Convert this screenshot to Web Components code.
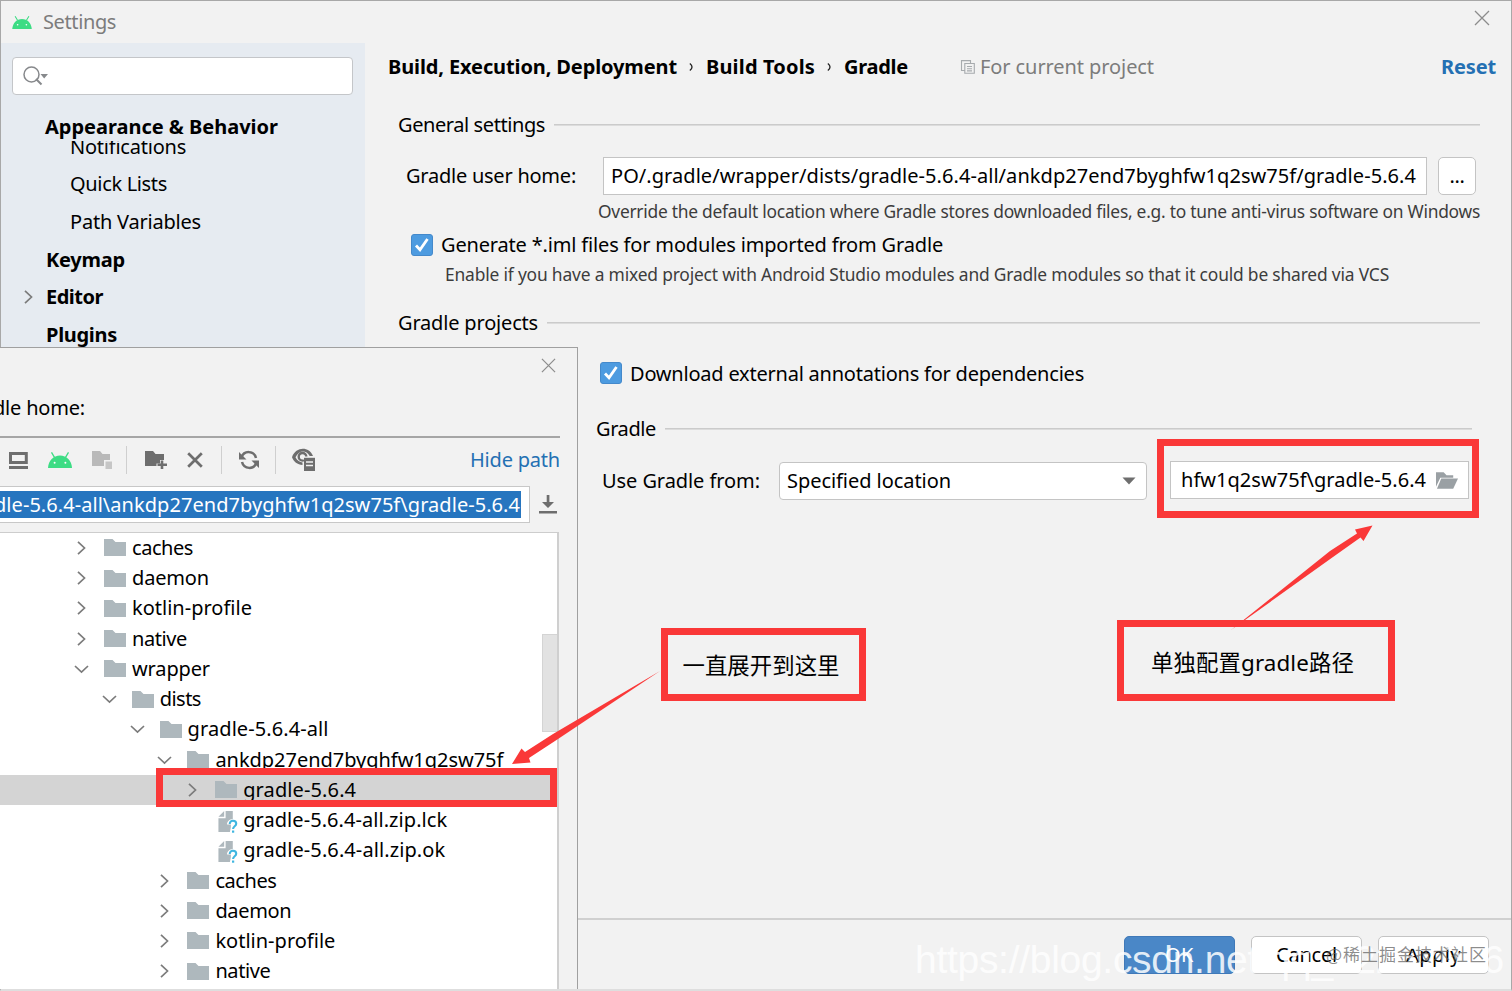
<!DOCTYPE html>
<html lang="en">
<head>
<meta charset="utf-8">
<title>Settings</title>
<style>
    body {
        margin: 0;
        width: 1512px;
        height: 991px;
        overflow: hidden;
        position: relative;
        background: #f2f2f2;
        color: #000;
        font: 20px/28px "Noto Sans", "Noto Sans CJK SC", sans-serif;
    }
</style>
</head>
<body>
<settings-window></settings-window>
<path-dialog></path-dialog>
<page-marks></page-marks>

<script>
const ICONS = {
    android: `<svg viewBox="0 0 24 16"><path d="M3.500 .3l3 5M20.500 .3l-3 5" stroke="#3ddc84" stroke-width="1.3" fill="none"/><path d="M0 16C.4 8.500 5.500 3.600 12 3.600S23.600 8.500 24 16z" fill="#3ddc84"/><circle cx="6.600" cy="10.800" r="1" fill="#fff"/><circle cx="17.400" cy="10.800" r="1" fill="#fff"/></svg>`,
    close: `<svg viewBox="0 0 16 16"><path d="M1 1l14 14M15 1L1 15" stroke="#8c8c8c" stroke-width="1.300" fill="none"/></svg>`,
    search: `<svg viewBox="0 0 26 20"><circle cx="8.500" cy="8.500" r="7.500" stroke="#87898c" stroke-width="1.500" fill="none"/><path d="M13 13l5.500 5.500" stroke="#87898c" stroke-width="2"/><path d="M17.500 8H25l-3.800 4.500z" fill="#87898c"/></svg>`,
    right: `<svg viewBox="0 0 14 14"><path d="M4 .8L10.500 7 4 13.200" stroke="#7b7b7b" stroke-width="1.700" fill="none"/></svg>`,
    down: `<svg viewBox="0 0 14 14"><path d="M1 4l6.500 6L14 4" stroke="#7b7b7b" stroke-width="1.700" fill="none"/></svg>`,
    folder: `<svg viewBox="0 0 22 17"><path d="M0 0h8.500l3 3H22v14H0z" fill="#aeb8bd"/></svg>`,
    file: `<svg viewBox="0 0 20 23"><path d="M6 0v6H0zM7.500 0H15v8.500c-3.500 0-6 2-6 5.500h4v3l-1 5H0V7.500h7.500z" fill="#aeb8bd"/><path d="M11.800 13.500c0-4.500 6.800-4.200 6.800-.2 0 2.700-3.300 2.700-3.300 5.500" stroke="#40b6e0" stroke-width="2.200" fill="none"/><path d="M14.200 20.400h2.300v2.300h-2.300z" fill="#40b6e0"/></svg>`,
    copy: `<svg viewBox="0 0 14 14"><path d="M3.500 10.500h-3V.6h9v3M3.800 3.500h9.500v9.800H3.800zM6 6.500h5M6 8.700h5M6 10.900h5" stroke="#a7abae" stroke-width="1.100" fill="none"/></svg>`,
    open: `<svg viewBox="0 0 23 17"><path d="M0 15V0h8l3 3h7v2.500H4.500z" fill="#9aa0a4"/><path d="M5.500 6.500H23L18 17H1z" fill="#9aa0a4"/></svg>`,
    desktop: `<svg viewBox="0 0 19 17"><path d="M1.500 1.500h15.800v9H1.500z" stroke="#6e6e6e" stroke-width="3" fill="none"/><path d="M0 14h19v3H0z" fill="#6e6e6e"/></svg>`,
    module: `<svg viewBox="0 0 20 18"><path d="M0 0h8l2.500 3H18v6h-6v6H0z" fill="#b9b9b9"/><path d="M13.500 10.500H20V18h-6.500z" fill="#c6c6c6"/></svg>`,
    add: `<svg viewBox="0 0 22 18"><path d="M0 0h8l2.500 3H19v6h-4v3.500h-3.500V15H0z" fill="#6e6e6e"/><path d="M15.700 9.500h2.600v3H22V15h-3.700v3h-2.600v-3h-3.200v-2.500h3.200z" fill="#6e6e6e"/></svg>`,
    remove: `<svg viewBox="0 0 16 16"><path d="M1.200 1.200l13.600 13.600M14.800 1.200L1.200 14.800" stroke="#6e6e6e" stroke-width="2.700" fill="none"/></svg>`,
    refresh: `<svg viewBox="0 0 20 18"><path d="M2.500 6.500C5-1 15-.5 17 7M17.500 11.500C15 19 5 18.500 3 11" stroke="#6e6e6e" stroke-width="2.500" fill="none"/><path d="M0 1v7.500h7.500zM20 17V9.500h-7.500z" fill="#6e6e6e"/></svg>`,
    eye: `<svg viewBox="0 0 23 22"><path d="M0 8.200C4-2.700 17-2.700 21 7h-3.300C14 .8 7.200 1 3.500 8.200c1.500 3.200 4.500 5 7 5.200v2.500C5.500 15.700 1.500 12.500 0 8.200z" fill="#6e6e6e"/><circle cx="10.500" cy="7.800" r="3.800" stroke="#6e6e6e" stroke-width="2.400" fill="none"/><path d="M11 7.500h12v3H11z" fill="#f2f2f2"/><path d="M12 8.800h11V22H12z" fill="#6e6e6e"/><path d="M14 13h7M14 16.500h7" stroke="#f2f2f2" stroke-width="1.500"/></svg>`,
    download: `<svg viewBox="0 0 18 19"><path d="M7.700 0h2.700v7H15l-6 6-6-6h4.700zM0 16h18v2.600H0z" fill="#6e6e6e"/></svg>`,
    arrow: `<svg viewBox="0 0 14 8"><path d="M.5.500h13L7 7.500z" fill="#6e6e6e"/></svg>`,
    check: `<svg viewBox="0 0 22 22"><rect x=".5" y=".5" width="21" height="21" rx="2.500" fill="#4d9be0" stroke="#4489cb"/><path d="M5 11.500l4 4.200L16.500 5" stroke="#fff" stroke-width="2.800" fill="none"/></svg>`,
    crumb: `<svg viewBox="0 0 6 10"><path d="M1 .8C4.500 3.500 4.500 6.500 1 9.200" stroke="#222" stroke-width="1.600" fill="none"/></svg>`
};

class UiIcon extends HTMLElement {
    connectedCallback() {
        const w = this.getAttribute('w');
        const h = this.getAttribute('h');
        this.attachShadow({ mode: 'open' }).innerHTML = `
        <style>
            :host { display: block; flex: none; width: ${w}px; height: ${h}px; }
            svg { display: block; width: 100%; height: 100%; overflow: visible; }
        </style>
        ${ICONS[this.getAttribute('name')]}`;
    }
}

// A single line of text, tracked so that it takes exactly "w" pixels
class UiText extends HTMLElement {
    connectedCallback() {
        this.attachShadow({ mode: 'open' }).innerHTML = `
        <style>
            :host { display: block; flex: none; white-space: nowrap; }
            span { display: inline-block; vertical-align: top; }
        </style>
        <span><slot></slot></span>`;
        const w = Number(this.getAttribute('w'));
        if (!w) return;
        const span = this.shadowRoot.querySelector('span');
        const natural = span.getBoundingClientRect().width;
        this.style.width = w + 'px';
        span.style.letterSpacing = (w - natural) / this.textContent.length + 'px';
    }
}

class SectionTitle extends HTMLElement {
    connectedCallback() {
        this.attachShadow({ mode: 'open' }).innerHTML = `
        <style>
            :host { display: flex; align-items: center; gap: 9px; }
            i { flex: 1; height: 1px; background: #cbcbcb; border-bottom: 1px solid #dcdcdc; }
        </style>
        <slot></slot><i></i>`;
    }
}

class UiButton extends HTMLElement {
    connectedCallback() {
        this.attachShadow({ mode: 'open' }).innerHTML = `
        <style>
            :host {
                display: flex;
                align-items: center;
                justify-content: center;
                box-sizing: border-box;
                height: 38px;
                background: #fff;
                border: 1.5px solid #c4c4c4;
                border-radius: 5px;
            }
            :host([primary]) { background: #4a87c7; border-color: #4079b8; color: #fff; }
        </style>
        <slot></slot>`;
    }
}

class SettingsSidebar extends HTMLElement {
    connectedCallback() {
        this.attachShadow({ mode: 'open' }).innerHTML = `
        <style>
            :host { display: flex; flex-direction: column; width: 364px; height: 305px; background: #e6ebf1; overflow: hidden; }
            .search {
                box-sizing: border-box;
                display: flex;
                align-items: center;
                width: 341px;
                height: 38px;
                margin: 14px 0 0 11px;
                padding-left: 10px;
                background: #fff;
                border: 1.5px solid #c4c6c9;
                border-radius: 4px;
            }
            .sticky { margin: 17px 0 0 44px; height: 29px; display: flex; align-items: center; flex: none; font-weight: 700; }
            .list { flex: 1; overflow: hidden; }
            .row { display: flex; align-items: center; height: 37.600px; }
            .row:first-child { margin-top: -13px; }
            .sub { padding-left: 69px; }
            .top { padding-left: 45px; font-weight: 700; }
            .node { padding-left: 20px; gap: 11px; font-weight: 700; }
        </style>
        <div class="search"><ui-icon name="search" w="26" h="20"></ui-icon></div>
        <div class="sticky"><ui-text w="233">Appearance &amp; Behavior</ui-text></div>
        <div class="list">
            <div class="row sub"><ui-text w="116">Notifications</ui-text></div>
            <div class="row sub"><ui-text w="97">Quick Lists</ui-text></div>
            <div class="row sub"><ui-text w="131">Path Variables</ui-text></div>
            <div class="row top"><ui-text w="79">Keymap</ui-text></div>
            <div class="row node"><ui-icon name="right" w="14" h="14"></ui-icon><ui-text w="57">Editor</ui-text></div>
            <div class="row top"><ui-text w="71">Plugins</ui-text></div>
        </div>`;
    }
}

class GradlePage extends HTMLElement {
    connectedCallback() {
        this.attachShadow({ mode: 'open' }).innerHTML = `
        <style>
            :host { display: flex; flex-direction: column; flex: 1; }
            .row { display: flex; align-items: center; flex: none; box-sizing: border-box; }
            .crumbs { height: 48px; padding: 0 15px 0 23px; font-weight: 700; }
            .crumbs ui-icon { margin: 0 12px; }
            .scope { display: flex; align-items: center; gap: 5px; margin-left: 53px; color: #7c7c7c; font-weight: 400; }
            .crumbs .scope ui-icon { margin: 0; }
            .reset { margin-left: auto; color: #2470b3; }
            .t1 { margin: 2px 31px 0 33px; height: 64px; }
            .home { height: 38px; padding-left: 41px; }
            .input {
                display: flex;
                align-items: center;
                box-sizing: border-box;
                height: 38px;
                background: #fff;
                border: 1.500px solid #c4c4c4;
            }
            .home .input { width: 824px; margin-left: 27px; padding-left: 7px; }
            .home ui-button { width: 38px; margin-left: 11px; }
            .hint { color: #3c3c3c; font-size: 17.400px; }
            .t2 { margin: 0 31px 0 33px; height: 76px; }
            .t3 { margin: 20px 39px 0 231px; height: 48px; }
            .from { height: 56px; padding-left: 237px; }
            .select {
                display: flex;
                align-items: center;
                justify-content: space-between;
                box-sizing: border-box;
                width: 368px;
                height: 38px;
                margin: -1px 0 0 19px;
                padding: 0 10px 0 7px;
                background: #fff;
                border: 1.500px solid #c4c4c4;
                border-radius: 4px;
            }
            .marked {
                display: flex;
                align-items: center;
                box-sizing: border-box;
                width: 322px;
                height: 79px;
                margin: -18px 0 -12px 10px;
                padding-left: 6px;
                border: 7px solid #fa3838;
            }
            .marked .input { width: 299px; margin-top: 4px; padding-left: 10px; gap: 10px; }
        </style>
        <div class="row crumbs">
            <ui-text w="289">Build, Execution, Deployment</ui-text>
            <ui-icon name="crumb" w="5" h="10"></ui-icon>
            <ui-text w="109">Build Tools</ui-text>
            <ui-icon name="crumb" w="5" h="10"></ui-icon>
            <ui-text w="64">Gradle</ui-text>
            <div class="scope"><ui-icon name="copy" w="14" h="14"></ui-icon><ui-text w="174">For current project</ui-text></div>
            <ui-text class="reset" w="55">Reset</ui-text>
        </div>
        <section-title class="t1"><ui-text w="147">General settings</ui-text></section-title>
        <div class="row home">
            <ui-text w="170">Gradle user home:</ui-text>
            <div class="input"><ui-text w="805">PO/.gradle/wrapper/dists/gradle-5.6.4-all/ankdp27end7byghfw1q2sw75f/gradle-5.6.4</ui-text></div>
            <ui-button><ui-text w="15">...</ui-text></ui-button>
        </div>
        <div class="row hint" style="height: 32px; padding-left: 233px"><ui-text w="882">Override the default location where Gradle stores downloaded files, e.g. to tune anti-virus software on Windows</ui-text></div>
        <div class="row" style="height: 36px; padding-left: 46px; gap: 8px"><ui-icon name="check" w="22" h="22"></ui-icon><ui-text w="502">Generate *.iml files for modules imported from Gradle</ui-text></div>
        <div class="row hint" style="height: 22px; padding-left: 80px"><ui-text w="944">Enable if you have a mixed project with Android Studio modules and Gradle modules so that it could be shared via VCS</ui-text></div>
        <section-title class="t2"><ui-text w="140">Gradle projects</ui-text></section-title>
        <div class="row" style="height: 24px; padding-left: 235px; gap: 8px"><ui-icon name="check" w="22" h="22"></ui-icon><ui-text w="454" style="margin-top: 2px">Download external annotations for dependencies</ui-text></div>
        <section-title class="t3"><ui-text w="60">Gradle</ui-text></section-title>
        <div class="row from">
            <ui-text w="158">Use Gradle from:</ui-text>
            <div class="select"><ui-text w="164">Specified location</ui-text><ui-icon name="arrow" w="14" h="8"></ui-icon></div>
            <div class="marked"><div class="input"><ui-text w="245">hfw1q2sw75f\\gradle-5.6.4</ui-text><ui-icon name="open" w="22" h="17"></ui-icon></div></div>
        </div>`;
    }
}

class SettingsWindow extends HTMLElement {
    connectedCallback() {
        this.attachShadow({ mode: 'open' }).innerHTML = `
        <style>
            :host {
                display: flex;
                flex-direction: column;
                box-sizing: border-box;
                width: 1512px;
                height: 991px;
                border: 1px solid #a8a8a8;
                border-bottom: 2px solid #dedede;
            }
            header { display: flex; align-items: center; height: 42px; padding: 0 21px 0 11px; color: #7c7c7c; flex: none; }
            header ui-text { margin-left: 11px; }
            .close { margin: -8px 0 0 auto; }
            main { display: flex; flex: 1; }
            footer {
                display: flex;
                justify-content: flex-end;
                gap: 16px;
                box-sizing: border-box;
                height: 71px;
                padding: 16px 22px 0 0;
                border-top: 2px solid #d0d0d0;
            }
            footer ui-button { width: 111px; }
        </style>
        <header>
            <ui-icon name="android" w="20" h="13"></ui-icon>
            <ui-text w="73">Settings</ui-text>
            <ui-icon class="close" name="close" w="16" h="16"></ui-icon>
        </header>
        <main>
            <settings-sidebar></settings-sidebar>
            <gradle-page></gradle-page>
        </main>
        <footer>
            <ui-button primary><ui-text w="29">OK</ui-text></ui-button>
            <ui-button><ui-text w="61">Cancel</ui-text></ui-button>
            <ui-button><ui-text w="55">Apply</ui-text></ui-button>
        </footer>`;
    }
}

const TREE = [
    [0, 'right', 'caches', 61],
    [0, 'right', 'daemon', 77],
    [0, 'right', 'kotlin-profile', 120],
    [0, 'right', 'native', 55],
    [0, 'down', 'wrapper', 78],
    [1, 'down', 'dists', 41],
    [2, 'down', 'gradle-5.6.4-all', 141],
    [3, 'down', 'ankdp27end7byghfw1q2sw75f', 288],
    [4, 'right', 'gradle-5.6.4', 113, 'selected'],
    [4, '', 'gradle-5.6.4-all.zip.lck', 204],
    [4, '', 'gradle-5.6.4-all.zip.ok', 202],
    [3, 'right', 'caches', 61],
    [3, 'right', 'daemon', 76],
    [3, 'right', 'kotlin-profile', 120],
    [3, 'right', 'native', 55]
];

class FileTree extends HTMLElement {
    connectedCallback() {
        this.attachShadow({ mode: 'open' }).innerHTML = `
        <style>
            :host {
                display: block;
                position: relative;
                box-sizing: border-box;
                width: 559px;
                height: 458px;
                overflow: hidden;
                background: #fff;
                border-top: 1px solid #cdcdcd;
                border-right: 2px solid #cfcfcf;
            }
            .row { display: flex; align-items: center; height: 30.240px; }
            .row.selected { background: #d4d4d4; }
            .twist { width: 30px; flex: none; }
            .kind { width: 28px; flex: none; }
            .thumb {
                position: absolute;
                right: 0;
                top: 101px;
                width: 15px;
                height: 98px;
                background: #e2e2e2;
                border: 1px solid #d4d4d4;
                border-right: 0;
                box-sizing: border-box;
            }
        </style>
        ${TREE.map(([level, twist, name, w, state]) => `
        <div class="row ${state || ''}" style="padding-left: ${74 + level * 27.8}px">
            <div class="twist">${twist ? `<ui-icon name="${twist}" w="14" h="14"></ui-icon>` : ''}</div>
            <div class="kind">${twist ? '<ui-icon name="folder" w="22" h="17"></ui-icon>' : '<ui-icon name="file" w="20" h="22" style="margin: 3px 0 0 3px"></ui-icon>'}</div>
            <ui-text w="${w}">${name}</ui-text>
        </div>`).join('')}
        <div class="thumb"></div>`;
    }
}

class PathDialog extends HTMLElement {
    connectedCallback() {
        this.attachShadow({ mode: 'open' }).innerHTML = `
        <style>
            :host {
                display: flex;
                flex-direction: column;
                position: absolute;
                left: 0;
                top: 347px;
                box-sizing: border-box;
                width: 578px;
                height: 642px;
                overflow: hidden;
                background: #f2f2f2;
                border-top: 1px solid #a0a0a0;
                border-right: 1px solid #a0a0a0;
            }
            .close { margin: 10px 0 0 541px; }
            .label { height: 62px; display: flex; align-items: center; margin: 4px 0 0 -7px; }
            .tools {
                display: flex;
                align-items: center;
                box-sizing: border-box;
                width: 560px;
                height: 49px;
                margin-top: -3px;
                padding: 0 0 2px 9px;
                border-top: 2px solid #a6a6a6;
            }
            hr { width: 1px; height: 28px; border: 0; margin: 0; background: #cfcfcf; }
            .link { margin-left: auto; color: #2470b3; }
            .path { display: flex; align-items: center; gap: 9px; height: 37px; margin-top: 1px; }
            .field {
                display: flex;
                align-items: center;
                box-sizing: border-box;
                width: 530px;
                height: 37px;
                background: #fff;
                border: 1px solid #c8c8c8;
                border-left: 0;
            }
            .field div { display: flex; align-items: center; justify-content: flex-end; box-sizing: border-box; width: 521px; height: 27px; padding: 1px 1px 0 0; background: #2675bf; color: #fff; overflow: hidden; }
            file-tree { margin-top: 9px; }
        </style>
        <ui-icon class="close" name="close" w="15" h="15"></ui-icon>
        <div class="label"><ui-text w="92">dle home:</ui-text></div>
        <div class="tools">
            <ui-icon name="desktop" w="19" h="17"></ui-icon>
            <ui-icon name="android" w="24" h="16" style="margin-left: 20px"></ui-icon>
            <ui-icon name="module" w="20" h="18" style="margin-left: 20px"></ui-icon>
            <hr style="margin-left: 14px">
            <ui-icon name="add" w="22" h="18" style="margin-left: 18px"></ui-icon>
            <ui-icon name="remove" w="16" h="16" style="margin-left: 20px"></ui-icon>
            <hr style="margin-left: 18px">
            <ui-icon name="refresh" w="20" h="18" style="margin-left: 17px"></ui-icon>
            <hr style="margin-left: 16px">
            <ui-icon name="eye" w="23" h="22" style="margin-left: 16px"></ui-icon>
            <ui-text class="link" w="90">Hide path</ui-text>
        </div>
        <div class="path">
            <div class="field"><div><ui-text w="526">dle-5.6.4-all\\ankdp27end7byghfw1q2sw75f\\gradle-5.6.4</ui-text></div></div>
            <ui-icon name="download" w="18" h="19"></ui-icon>
        </div>
        <file-tree></file-tree>`;
    }
}

// Red callouts and watermarks that lie over both windows
class PageMarks extends HTMLElement {
    connectedCallback() {
        this.attachShadow({ mode: 'open' }).innerHTML = `
        <style>
            :host { position: absolute; inset: 0; display: block; overflow: hidden; }
            .box {
                position: absolute;
                box-sizing: border-box;
                display: flex;
                align-items: center;
                justify-content: center;
                border: 7px solid #fa3838;
                font-size: 22.400px;
                line-height: 30px;
            }
            .here { left: 661px; top: 628px; width: 205px; height: 73px; padding: 3px 5px 0 0; }
            .alone { left: 1117px; top: 620px; width: 278px; height: 81px; padding: 4px 7px 0 0; }
            .row { left: 156px; top: 768px; width: 401px; height: 39px; }
            svg { position: absolute; left: 0; top: 0; }
            .csdn { position: absolute; left: 915px; top: 937px; font: 39px/46px "Liberation Sans", Arial, sans-serif; color: rgba(255, 255, 255, .85); }
            .juejin { position: absolute; left: 1326px; top: 940px; font: 17px/28px "Noto Sans CJK SC", sans-serif; color: rgba(95, 95, 95, .72); }
        </style>
        <div class="box here"><ui-text w="157">一直展开到这里</ui-text></div>
        <div class="box alone"><ui-text w="203">单独配置gradle路径</ui-text></div>
        <div class="box row"></div>
        <svg width="1512" height="991" viewBox="0 0 1512 991" fill="#fa3838">
            <path d="M660 671L555 741 529 758 530.500 762.500 512 764 521.500 748.500 525 752 553 734z"/>
            <path d="M1231 630L1330 551 1357 533.500 1355 529.500 1372.500 525.500 1363.500 541 1360.500 537.500 1333 557z"/>
        </svg>
        <div class="csdn"><ui-text w="589">https://blog.csdn.net/qq_42257036</ui-text></div>
        <div class="juejin"><ui-text w="161">@稀土掘金技术社区</ui-text></div>`;
    }
}

customElements.define('ui-icon', UiIcon);
customElements.define('ui-text', UiText);
customElements.define('section-title', SectionTitle);
customElements.define('ui-button', UiButton);
customElements.define('settings-sidebar', SettingsSidebar);
customElements.define('gradle-page', GradlePage);
customElements.define('file-tree', FileTree);
customElements.define('settings-window', SettingsWindow);
customElements.define('path-dialog', PathDialog);
customElements.define('page-marks', PageMarks);
</script>
</body>
</html>
